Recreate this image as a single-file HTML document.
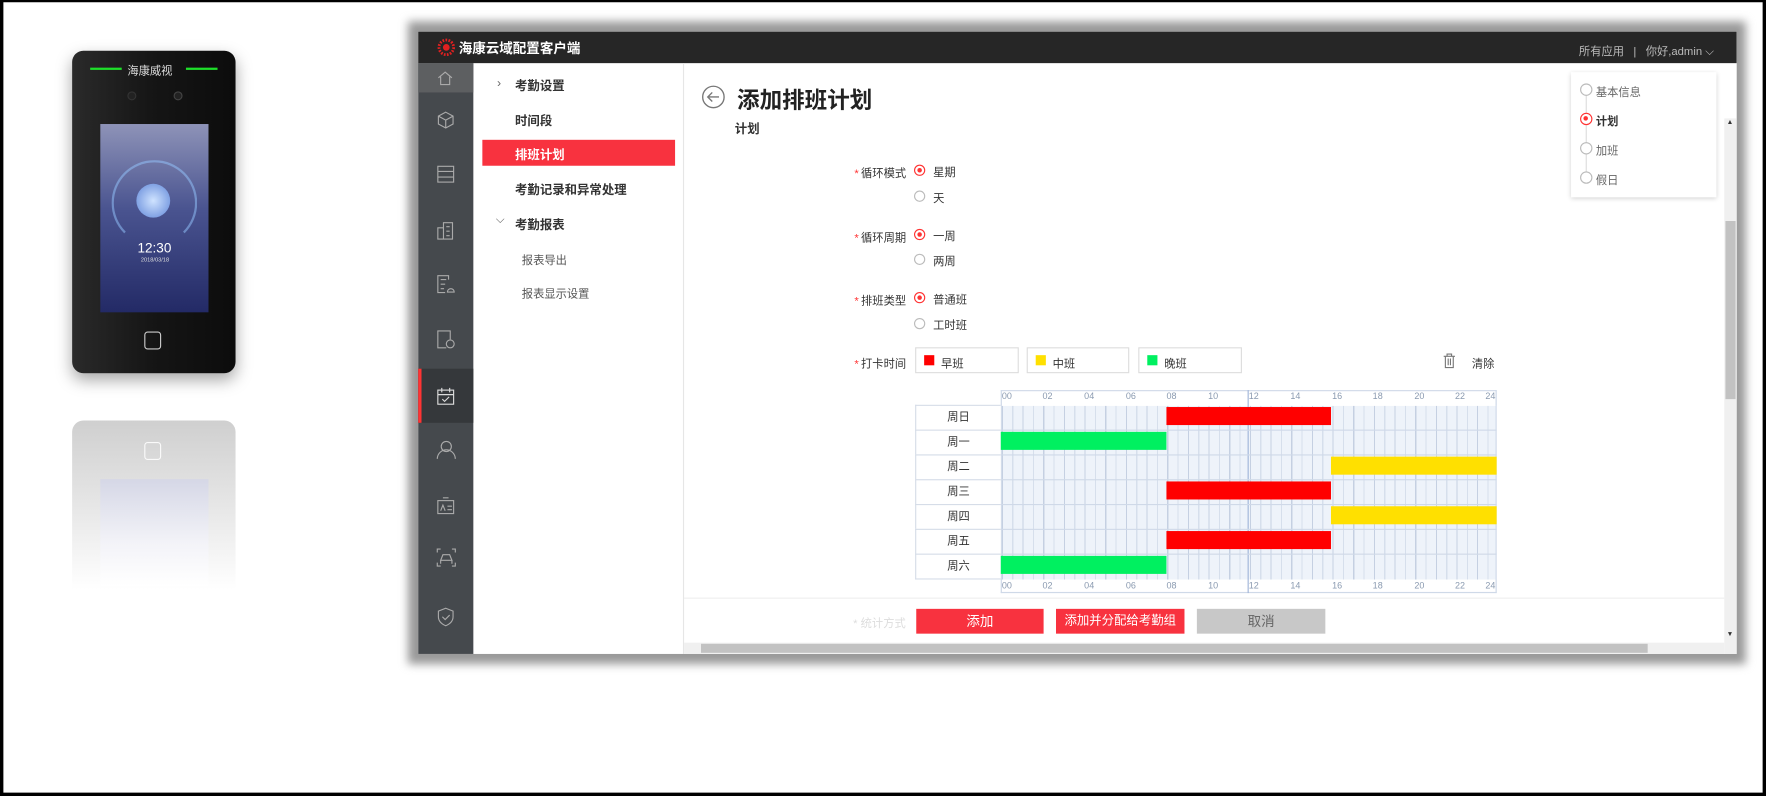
<!DOCTYPE html>
<html><head><meta charset="utf-8"><style>
*{margin:0;padding:0;box-sizing:border-box}
html,body{width:1766px;height:796px;overflow:hidden;background:#fff}
body{font-family:"Liberation Sans","Noto Sans CJK SC",sans-serif;}
#w{position:absolute;left:0;top:0;width:1567px;height:706px;transform:scale(1.127,1.1275);transform-origin:0 0;background:#fff}
#frame{position:absolute;left:0;top:0;width:1567px;height:706px;border:3px solid #000;border-top-width:2px;z-index:10}
.a{position:absolute}
.t{position:absolute;font-size:11px;color:#333;white-space:nowrap}
.side svg{position:absolute;left:16px}
.lbl{position:absolute;font-size:10px;color:#333;width:60px;text-align:right}
.lbl b{color:#f33;font-weight:normal;margin-right:2px}
.rad{position:absolute;width:10px;height:10px;border:1px solid #bbb;border-radius:50%;background:#fff}
.rad.on{border-color:#f33}
.rad.on:after{content:"";position:absolute;left:2px;top:2px;width:4px;height:4px;border-radius:50%;background:#f33}
.box{position:absolute;height:23px;border:1px solid #ddd;top:308px;font-size:10px;color:#333;padding:5px 0 0 22px}
.box i{position:absolute;left:7px;top:6px;width:9px;height:9px}
.row{position:absolute;left:812px;width:76px;height:22px;border-left:1px solid #d6dde8;border-top:1px solid #d6dde8;font-size:10px;color:#333;text-align:center;line-height:21px;background:#fff}
.bar{position:absolute;height:16px}
.ax{position:absolute;font-size:8px;color:#8a9ab0}
.btn{position:absolute;top:540px;height:22px;color:#fff;font-size:12px;text-align:center;line-height:22px}
</style></head><body><div id="w">
<div id="frame"></div>
<!-- device -->
<div class="a" style="left:64px;top:45px;width:145px;height:286px;border-radius:10px;background:linear-gradient(90deg,#2a2a2a,#151515 50%,#0c0c0c);box-shadow:0 6px 14px rgba(0,0,0,.35)"></div>
<div class="a" style="left:80px;top:60px;width:28px;height:2px;background:#1ee02a"></div>
<div class="a" style="left:165px;top:60px;width:28px;height:2px;background:#1ee02a"></div>
<div class="t" style="left:113px;top:54px;font-size:10px;color:#ddd">海康威视</div>
<div class="a" style="left:113px;top:81px;width:8px;height:8px;border-radius:50%;background:#222;border:1px solid #333"></div>
<div class="a" style="left:154px;top:81px;width:8px;height:8px;border-radius:50%;background:#222;border:1px solid #444"></div>
<div class="a" style="left:89px;top:110px;width:96px;height:167px;background:linear-gradient(180deg,#8e93b8,#4a5490 45%,#232a66)"></div>
<div class="a" style="left:99px;top:142px;width:76px;height:76px;border-radius:50%;border:2px solid rgba(150,200,255,.5);border-bottom-color:transparent"></div>
<div class="a" style="left:121px;top:163px;width:30px;height:30px;border-radius:50%;background:radial-gradient(#cfe3ff,#5f86d8)"></div>
<div class="t" style="left:122px;top:213px;color:#fff;font-size:12px">12:30</div>
<div class="t" style="left:125px;top:228px;color:#ddd;font-size:5px">2018/03/18</div>
<div class="a" style="left:128px;top:294px;width:15px;height:16px;border:1.5px solid #ccc;border-radius:3px"></div>
<div class="a" style="left:64px;top:373px;width:145px;height:150px;border-radius:10px 10px 0 0;background:linear-gradient(180deg,#cfcfcf,#e6e6e6 50%,#fff)"></div>
<div class="a" style="left:89px;top:425px;width:96px;height:95px;background:linear-gradient(180deg,#d5d7e6,#f3f3f8 60%,#fff)"></div>
<div class="a" style="left:128px;top:392px;width:15px;height:16px;border:1.5px solid #fafafa;border-radius:3px"></div>

<!-- app window -->
<div class="a" style="left:362px;top:19px;width:1187px;height:570px;background:#999;filter:blur(4px)"></div>
<div class="a" style="left:371px;top:28px;width:1170px;height:552px;background:#fff;overflow:hidden">
 <div class="a" style="left:0;top:0;width:1170px;height:28px;background:#262626"></div>
 <svg class="a" style="left:17px;top:6px" width="16" height="16"><circle cx="8" cy="8" r="6.5" fill="none" stroke="#e02020" stroke-width="2.5" stroke-dasharray="1.5 1.2"/><circle cx="8" cy="8" r="3" fill="#e02020"/></svg>
 <div class="t" style="left:36px;top:6px;color:#fff;font-size:12px;font-weight:bold">海康云域配置客户端</div>
 <div class="t" style="left:1030px;top:9px;color:#bbb;font-size:10px">所有应用 &nbsp; | &nbsp; 你好,admin ⌵</div>
 <!-- sidebar -->
 <div class="a side" style="left:0;top:28px;width:49px;height:524px;background:#45494d">
  <div class="a" style="left:0;top:0;width:49px;height:26px;background:#5d5f61"></div>
  <svg style="top:6px" width="16" height="14" fill="none" stroke="#aaa"><path d="M2 7 8 2l6 5M4 6v7h8V6"/></svg>
  <svg style="top:42px" width="17" height="17" fill="none" stroke="#aaa"><path d="M8.5 1.5 15 5v7l-6.5 3.5L2 12V5zM2 5l6.5 3.5L15 5M8.5 8.5v7"/></svg>
  <svg style="top:90px" width="17" height="17" fill="none" stroke="#aaa"><rect x="1.5" y="1.5" width="14" height="14"/><path d="M1.5 6h14M1.5 11h14"/></svg>
  <svg style="top:140px" width="17" height="17" fill="none" stroke="#aaa"><path d="M1.5 6h5v10h-5zM6.5 1.5h8v14.5h-8zM9 5h3M9 9h3M9 13h3"/></svg>
  <svg style="top:187px" width="17" height="18" fill="none" stroke="#aaa"><path d="M11 5V1.5H1.5v15H8M4 5h5M4 9h4M4 13h3"/><path d="M10 16a3 3 0 0 1 6 0z"/></svg>
  <svg style="top:236px" width="17" height="18" fill="none" stroke="#aaa"><path d="M9 16.5H1.5v-15h11V9"/><circle cx="12.5" cy="13" r="3.5"/></svg>
  <div class="a" style="left:0;top:271px;width:49px;height:48px;background:#35383b;border-left:3px solid #f33"></div>
  <svg style="top:287px" width="17" height="17" fill="none" stroke="#ddd"><rect x="1.5" y="3" width="14" height="12.5"/><path d="M5 1v4M12 1v4M1.5 7h14M5.5 11l2 2 4-4"/></svg>
  <svg style="top:334px" width="18" height="18" fill="none" stroke="#aaa"><circle cx="9" cy="6" r="4.5"/><path d="M1 17a8 8 0 0 1 16 0"/></svg>
  <svg style="top:384px" width="17" height="17" fill="none" stroke="#aaa"><rect x="1.5" y="4" width="14" height="11.5"/><path d="M6 1.5h5M4 13l2-5 2 5M10 9h4M10 12h4"/></svg>
  <svg style="top:430px" width="18" height="17" fill="none" stroke="#aaa"><path d="M1 4V1h3M14 1h3v3M1 13v3h3M14 16h3v-3M4 11l2-5h6l2 5zM4 11v3M14 11v3"/></svg>
  <svg style="top:482px" width="17" height="18" fill="none" stroke="#aaa"><path d="M8.5 1.5 15 4v5c0 4-3 6.5-6.5 8C5 15.5 2 13 2 9V4z"/><path d="M5.5 9l2.5 2.5 4-4"/></svg>
 </div>
 <!-- nav -->
 <div class="a" style="left:235px;top:28px;width:1px;height:524px;background:#e6e6e6"></div>
 <div class="t" style="left:70px;top:40px;color:#666">›</div>
 <div class="t" style="left:86px;top:40px;font-weight:bold">考勤设置</div>
 <div class="t" style="left:86px;top:71px;font-weight:bold">时间段</div>
 <div class="a" style="left:57px;top:96px;width:171px;height:23px;background:#f8323f"></div>
 <div class="t" style="left:86px;top:101px;font-weight:bold;color:#fff">排班计划</div>
 <div class="t" style="left:86px;top:132px;font-weight:bold">考勤记录和异常处理</div>
 <div class="t" style="left:69px;top:162px;color:#666;font-size:10px">⌵</div>
 <div class="t" style="left:86px;top:163px;font-weight:bold">考勤报表</div>
 <div class="t" style="left:92px;top:194px;font-size:10px;color:#555">报表导出</div>
 <div class="t" style="left:92px;top:224px;font-size:10px;color:#555">报表显示设置</div>
 <!-- scrollbars -->
 <div class="a" style="left:1159px;top:77px;width:11px;height:475px;background:#f0f0f0"></div>
 <div class="a" style="left:1160px;top:168px;width:9px;height:158px;background:#c2c2c2"></div>
 <div class="t" style="left:1161px;top:78px;font-size:6px;color:#333">▲</div>
 <div class="t" style="left:1161px;top:532px;font-size:6px;color:#333">▼</div>
 <div class="a" style="left:236px;top:542px;width:923px;height:10px;background:#f0f0f0"></div>
 <div class="a" style="left:251px;top:543px;width:840px;height:8px;background:#c2c2c2"></div>
</div>
<!-- content -->
<svg class="a" style="left:622px;top:75px" width="22" height="22" fill="none" stroke="#777" stroke-width="1.2"><circle cx="11" cy="11" r="9.5"/><path d="M16 11H6M10 7l-4 4 4 4"/></svg>
<div class="t" style="left:654px;top:73px;font-size:20px;font-weight:bold;color:#222">添加排班计划</div>
<div class="t" style="left:652px;top:106px;font-weight:bold">计划</div>

<div class="lbl" style="left:744px;top:145px"><b>*</b>循环模式</div>
<div class="rad on" style="left:811px;top:146px"></div><div class="t" style="left:828px;top:144px;font-size:10px">星期</div>
<div class="rad" style="left:811px;top:169px"></div><div class="t" style="left:828px;top:167px;font-size:10px">天</div>
<div class="lbl" style="left:744px;top:202px"><b>*</b>循环周期</div>
<div class="rad on" style="left:811px;top:203px"></div><div class="t" style="left:828px;top:201px;font-size:10px">一周</div>
<div class="rad" style="left:811px;top:225px"></div><div class="t" style="left:828px;top:223px;font-size:10px">两周</div>
<div class="lbl" style="left:744px;top:258px"><b>*</b>排班类型</div>
<div class="rad on" style="left:811px;top:259px"></div><div class="t" style="left:828px;top:257px;font-size:10px">普通班</div>
<div class="rad" style="left:811px;top:282px"></div><div class="t" style="left:828px;top:280px;font-size:10px">工时班</div>
<div class="lbl" style="left:744px;top:314px"><b>*</b>打卡时间</div>
<div class="box" style="left:812px;width:92px"><i style="background:#f00"></i>早班</div>
<div class="box" style="left:911px;width:91px"><i style="background:#ffe000"></i>中班</div>
<div class="box" style="left:1010px;width:92px"><i style="background:#00f060"></i>晚班</div>
<svg class="a" style="left:1280px;top:313px" width="12" height="14" fill="none" stroke="#777"><path d="M1 3h10M4 3V1h4v2M2.5 3v10h7V3M5 5v6M7 5v6"/></svg>
<div class="t" style="left:1306px;top:314px;font-size:10px">清除</div>

<!-- grid -->
<div class="a" style="left:888px;top:346px;width:440px;height:180px;border:1px solid #cfd9e8;background-color:#eef3fa;background-image:repeating-linear-gradient(90deg,#c5d0e2 0 1px,transparent 1px 9.17px,#d6dfec 9.17px 10.17px,transparent 10.17px 18.333px)"></div>
<div class="a" style="left:888px;top:346px;width:440px;height:14px;background:#fff;border:1px solid #cfd9e8;border-bottom:none"></div>
<div class="a" style="left:888px;top:514px;width:440px;height:12px;background:#fff;border:1px solid #cfd9e8;border-top:none"></div>
<div class="a" style="left:1107px;top:346px;width:1px;height:180px;background:#9fb4d8"></div>
<div class="ax" style="left:889px;top:347px">00</div>
<div class="ax" style="left:925px;top:347px">02</div><div class="ax" style="left:962px;top:347px">04</div><div class="ax" style="left:999px;top:347px">06</div><div class="ax" style="left:1035px;top:347px">08</div><div class="ax" style="left:1072px;top:347px">10</div><div class="ax" style="left:1108px;top:347px">12</div><div class="ax" style="left:1145px;top:347px">14</div><div class="ax" style="left:1182px;top:347px">16</div><div class="ax" style="left:1218px;top:347px">18</div><div class="ax" style="left:1255px;top:347px">20</div><div class="ax" style="left:1291px;top:347px">22</div><div class="ax" style="left:1318px;top:347px">24</div>
<div class="ax" style="left:889px;top:515px">00</div>
<div class="ax" style="left:925px;top:515px">02</div><div class="ax" style="left:962px;top:515px">04</div><div class="ax" style="left:999px;top:515px">06</div><div class="ax" style="left:1035px;top:515px">08</div><div class="ax" style="left:1072px;top:515px">10</div><div class="ax" style="left:1108px;top:515px">12</div><div class="ax" style="left:1145px;top:515px">14</div><div class="ax" style="left:1182px;top:515px">16</div><div class="ax" style="left:1218px;top:515px">18</div><div class="ax" style="left:1255px;top:515px">20</div><div class="ax" style="left:1291px;top:515px">22</div><div class="ax" style="left:1318px;top:515px">24</div>
<div class="a" style="left:812px;top:381px;width:516px;height:1px;background:#cfd9e8"></div>
<div class="a" style="left:812px;top:403px;width:516px;height:1px;background:#cfd9e8"></div>
<div class="a" style="left:812px;top:425px;width:516px;height:1px;background:#cfd9e8"></div>
<div class="a" style="left:812px;top:447px;width:516px;height:1px;background:#cfd9e8"></div>
<div class="a" style="left:812px;top:469px;width:516px;height:1px;background:#cfd9e8"></div>
<div class="a" style="left:812px;top:491px;width:516px;height:1px;background:#cfd9e8"></div>
<div class="row" style="top:359px">周日</div><div class="row" style="top:381px">周一</div><div class="row" style="top:403px">周二</div><div class="row" style="top:425px">周三</div><div class="row" style="top:447px">周四</div><div class="row" style="top:469px">周五</div><div class="row" style="top:491px;height:23px;border-bottom:1px solid #d6dde8">周六</div>
<div class="bar" style="left:1035px;top:361px;width:146px;background:#f00"></div>
<div class="bar" style="left:888px;top:383px;width:147px;background:#00f060"></div>
<div class="bar" style="left:1181px;top:405px;width:147px;background:#ffe000"></div>
<div class="bar" style="left:1035px;top:427px;width:146px;background:#f00"></div>
<div class="bar" style="left:1181px;top:449px;width:147px;background:#ffe000"></div>
<div class="bar" style="left:1035px;top:471px;width:146px;background:#f00"></div>
<div class="bar" style="left:888px;top:493px;width:147px;background:#00f060"></div>

<div class="a" style="left:607px;top:530px;width:923px;height:1px;background:#eee"></div>
<div class="t" style="left:757px;top:544px;font-size:10px;color:#ddd">* 统计方式</div>
<div class="btn" style="left:813px;width:113px;background:#f8323f">添加</div>
<div class="btn" style="left:937px;width:114px;background:#f8323f;font-size:11px">添加并分配给考勤组</div>
<div class="btn" style="left:1062px;width:114px;background:#c8c8c8;color:#666">取消</div>

<!-- steps -->
<div class="a" style="left:1394px;top:64px;width:129px;height:111px;background:#fff;box-shadow:0 1px 4px rgba(0,0,0,.18)"></div>
<div class="a" style="left:1407px;top:80px;width:1px;height:78px;background:#ddd"></div>
<div class="rad" style="left:1402px;top:74px;width:11px;height:11px"></div><div class="t" style="left:1416px;top:73px;font-size:10px;color:#666">基本信息</div>
<div class="rad on" style="left:1402px;top:100px;width:11px;height:11px"></div><div class="t" style="left:1416px;top:99px;font-size:10px;font-weight:bold">计划</div>
<div class="rad" style="left:1402px;top:126px;width:11px;height:11px"></div><div class="t" style="left:1416px;top:125px;font-size:10px;color:#666">加班</div>
<div class="rad" style="left:1402px;top:152px;width:11px;height:11px"></div><div class="t" style="left:1416px;top:151px;font-size:10px;color:#666">假日</div>
</div></body></html>
